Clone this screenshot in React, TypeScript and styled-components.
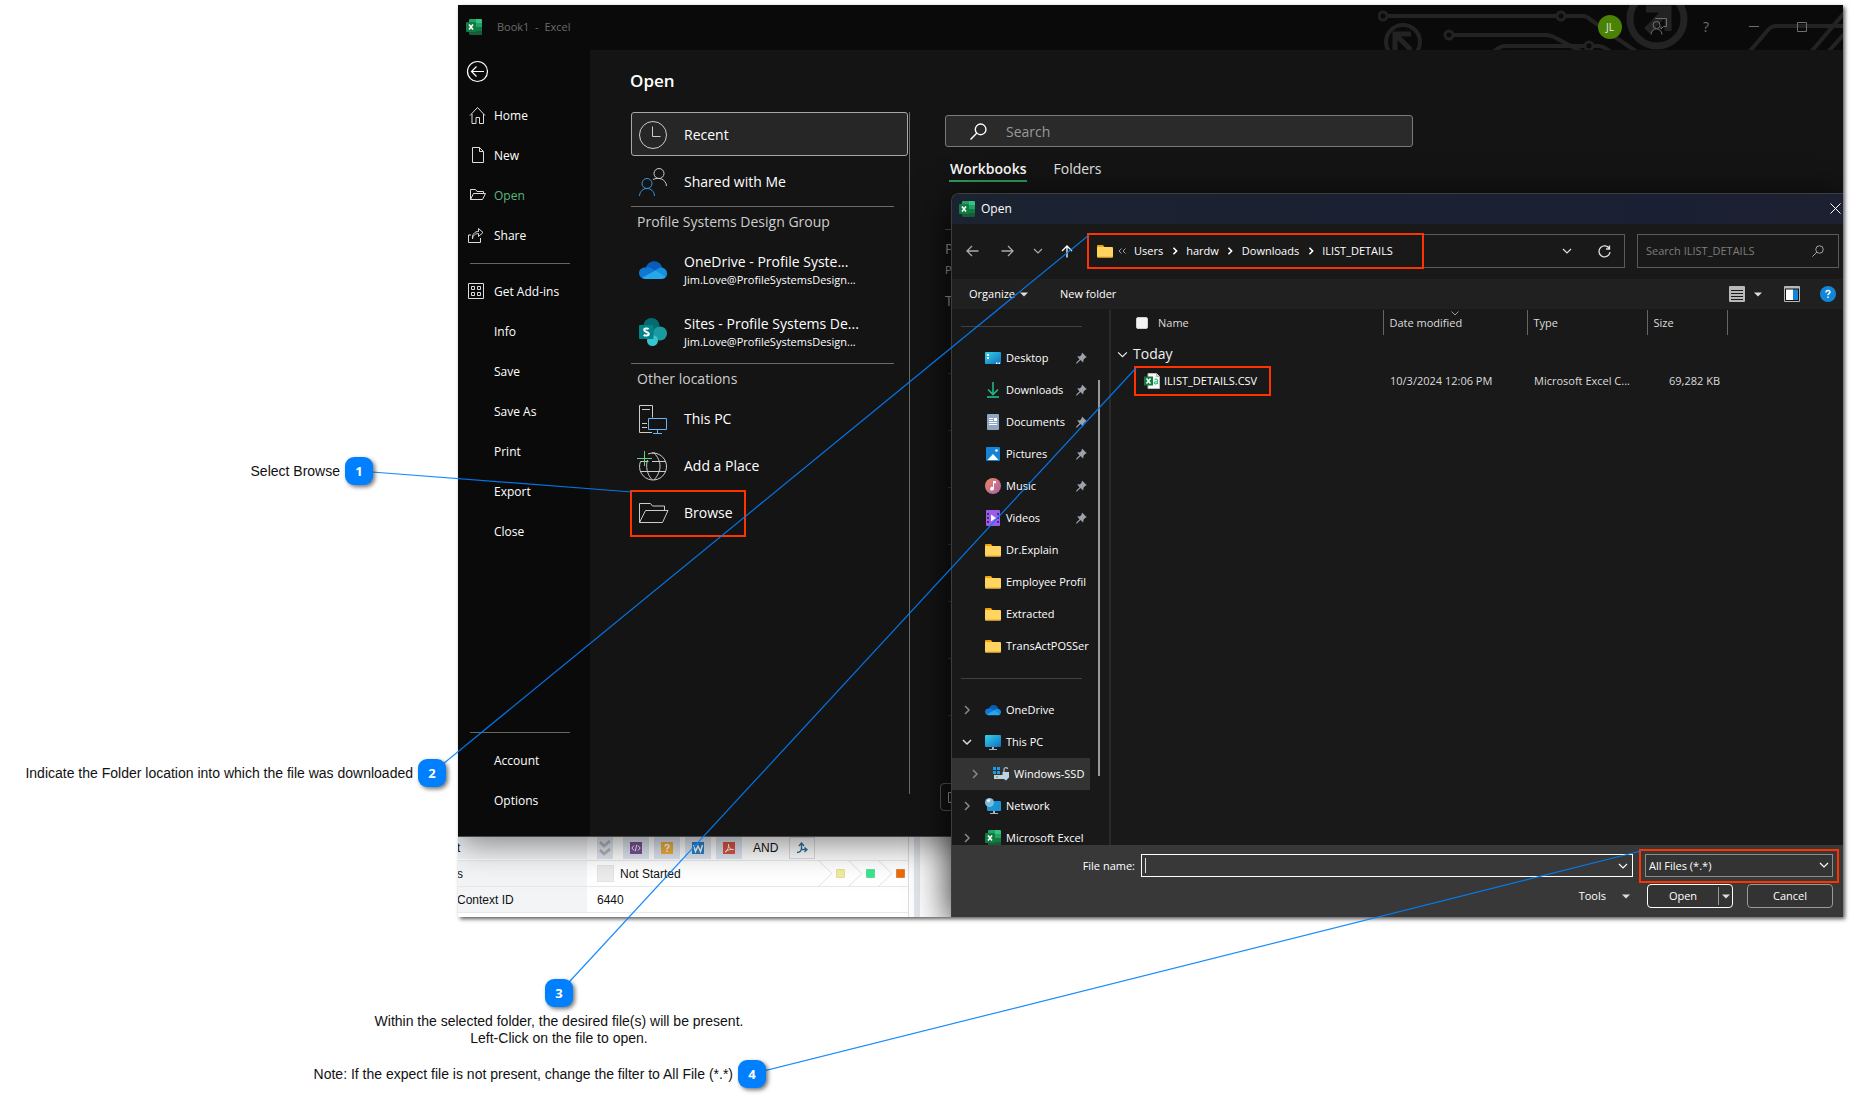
import React, { useLayoutEffect, useRef, useState } from "react";
import styled, { createGlobalStyle, css } from "styled-components";

const ui = `"Open Sans", "Noto Sans", sans-serif`;
const doc = `"Liberation Sans", Arial, sans-serif`;
const accent = "#007fff";
const marker = "#ff3300";

const GlobalStyle = createGlobalStyle`
  *, *::before, *::after { box-sizing: border-box; }
  body { margin: 0; background: #fff; color: #111; font-family: ${doc}; }
  button, input, select { font: inherit; color: inherit; margin: 0; }
  ul, ol, h1, h2, p { margin: 0; padding: 0; list-style: none; }
  svg { display: block; flex: none; }
`;

/* ---------- page and callouts ---------- */

const Page = styled.main`
  position: relative;
  min-height: 100vh;
  padding: 5px 9px 0 0;
  overflow: hidden;
`;

const Stage = styled.div`
  display: grid;
  grid-template-columns: 458px minmax(0, 1fr);
`;

const SideNotes = styled.div`
  display: flex;
  flex-direction: column;
  align-items: flex-end;
  gap: 274px;
  padding-top: 452px;
`;

const BottomNotes = styled.div`
  display: flex;
  flex-direction: column;
  align-items: flex-end;
  gap: 13px;
  width: 766px;
  padding: 62px 0 11px;
`;

const Note = styled.div<{ $inset?: number }>`
  display: flex;
  align-items: center;
  gap: 5px;
  margin-right: ${(p) => p.$inset ?? 0}px;
  font-size: 14px;
  line-height: 17px;
  white-space: nowrap;
`;

const StackedNote = styled(Note)`
  flex-direction: column;
  gap: 6px;
  width: 414px;
  text-align: center;
`;

const Badge = styled.span`
  position: relative;
  z-index: 6;
  display: grid;
  place-items: center;
  flex: none;
  width: 28px;
  height: 28px;
  border-radius: 9px;
  background: ${accent};
  color: #fff;
  font: 700 13px/16px ${ui};
  box-shadow: 2px 2px 4px rgba(0, 0, 0, 0.55);
`;

const Marked = styled.div`
  position: relative;
`;

const Highlight = styled.span<{ $inset: string }>`
  position: absolute;
  inset: ${(p) => p.$inset};
  border: 2px solid ${marker};
  pointer-events: none;
`;

const ConnectorLayer = styled.svg`
  position: absolute;
  inset: 0;
  z-index: 5;
  width: 100%;
  height: 100%;
  pointer-events: none;
`;

type Segment = { x1: number; y1: number; x2: number; y2: number };

function Connectors({ count }: { count: number }) {
  const ref = useRef<SVGSVGElement>(null);
  const [segments, setSegments] = useState<Segment[]>([]);

  useLayoutEffect(() => {
    const measure = () => {
      const host = ref.current;
      if (!host) return;
      const origin = host.getBoundingClientRect();
      const next: Segment[] = [];
      for (let i = 1; i <= count; i += 1) {
        const from = document.querySelector(`[data-badge="${i}"]`)?.getBoundingClientRect();
        const to = document.querySelector(`[data-target="${i}"]`)?.getBoundingClientRect();
        if (from && to) {
          next.push({
            x1: from.left + from.width / 2 - origin.left,
            y1: from.top + from.height / 2 - origin.top,
            x2: to.left + 2 - origin.left,
            y2: to.top + 2 - origin.top,
          });
        }
      }
      setSegments(next);
    };
    measure();
    document.fonts?.ready.then(measure);
    window.addEventListener("resize", measure);
    return () => window.removeEventListener("resize", measure);
  }, [count]);

  return (
    <ConnectorLayer ref={ref} aria-hidden="true">
      {segments.map((s, i) => (
        <line key={i} {...s} stroke={accent} strokeOpacity={0.9} strokeWidth={1.2} />
      ))}
    </ConnectorLayer>
  );
}

/* ---------- captured desktop ---------- */

const Desktop = styled.section`
  position: relative;
  display: flex;
  flex-direction: column;
  min-height: 912px;
  background: #fff;
  font-family: ${ui};
  box-shadow: 2px 2px 4px rgba(0, 0, 0, 0.65);
`;

const Clip = styled.div`
  position: relative;
  flex: 1;
  display: flex;
  flex-direction: column;
  overflow: hidden;
`;

const ExcelWindow = styled.div`
  position: relative;
  z-index: 1;
  display: flex;
  flex-direction: column;
  height: 832px;
  background: #141414;
  color: #fff;
  border-bottom: 1px solid #4a4648;
  box-shadow: 0 6px 32px rgba(0, 0, 0, 0.5);
`;

const TitleBar = styled.header`
  position: relative;
  display: flex;
  align-items: center;
  height: 45px;
  padding: 0 17px 2px 8px;
  background: #0a0a0a;
`;

const TitleText = styled.span`
  flex: 1;
  margin-left: 15px;
  padding-top: 1px;
  color: #6a6a6a;
  font-size: 11px;
  line-height: 16px;
  white-space: pre;
`;

const Circuit = styled.svg`
  position: absolute;
  top: 0;
  right: 0;
`;

const Avatar = styled.span`
  position: relative;
  display: grid;
  place-items: center;
  width: 24px;
  height: 24px;
  margin-right: 12px;
  border-radius: 50%;
  background: #498205;
  color: #e6e6e6;
  font-size: 10px;
`;

const WindowButton = styled.button`
  position: relative;
  display: grid;
  place-items: center;
  width: 48px;
  height: 42px;
  padding: 0;
  border: 0;
  background: none;
  color: #6f6f6f;
  font-size: 14px;
`;

const Backstage = styled.div`
  flex: 1;
  display: grid;
  grid-template-columns: 132px auto minmax(0, 1fr);
  min-height: 0;
`;

const NavRail = styled.nav`
  display: flex;
  flex-direction: column;
  padding-bottom: 15px;
  background: #0a0a0a;
`;

const BackButton = styled.button`
  display: flex;
  align-items: center;
  height: 46px;
  padding: 0 0 3px 8px;
  border: 0;
  background: none;
`;

const NavItem = styled.button<{ $active?: boolean }>`
  display: grid;
  grid-template-columns: 18px 1fr;
  align-items: center;
  gap: 8px;
  height: 40px;
  padding: 0 0 0 10px;
  border: 0;
  background: none;
  color: ${(p) => (p.$active ? "#57b97b" : "#fff")};
  font-size: 12px;
  line-height: 16px;
  text-align: left;
  white-space: nowrap;

  span { grid-column: 2; }
`;

const NavRule = styled.hr<{ $push?: boolean }>`
  width: 100px;
  margin: ${(p) => (p.$push ? "auto 0 8px 12px" : "7px 0 8px 12px")};
  border: 0;
  border-top: 1px solid #666;
`;

const PlacesPane = styled.section`
  display: flex;
  flex-direction: column;
  padding: 17px 35px 42px 40px;
`;

const PaneTitle = styled.h1`
  font-size: 17px;
  line-height: 28px;
  font-weight: 600;
`;

const Places = styled.div`
  flex: 1;
  display: flex;
  flex-direction: column;
  gap: 3px;
  width: 280px;
  margin-top: 17px;
  padding: 0 1px;
  border-right: 1px solid #6a6a6a;
`;

const PlaceButton = styled.button<{ $selected?: boolean }>`
  display: flex;
  align-items: center;
  gap: 17px;
  height: 44px;
  padding: 1px 11px 0 7px;
  border: 1px solid ${(p) => (p.$selected ? "#a8a8a8" : "transparent")};
  border-radius: 3px;
  background: ${(p) => (p.$selected ? "#262626" : "none")};
  font-size: 14px;
  line-height: 20px;
  text-align: left;
`;

const PlaceMark = styled(Marked)`
  align-self: flex-start;
`;

const AccountPlace = styled.button`
  display: grid;
  grid-template-columns: 28px 1fr;
  align-items: center;
  gap: 17px;
  padding: 13px 8px 10px;
  border: 0;
  background: none;
  text-align: left;
  white-space: nowrap;
`;

const AccountName = styled.span`
  display: block;
  font-size: 14px;
  line-height: 20px;
`;

const AccountMail = styled.span`
  display: block;
  font-size: 11px;
  line-height: 16px;
`;

const PlaceRule = styled.hr`
  width: 263px;
  margin: 0;
  border: 0;
  border-top: 1px solid #6a6a6a;
`;

const PlaceHeading = styled.h2`
  height: 26px;
  padding-left: 6px;
  color: #cdcdcd;
  font-size: 14px;
  line-height: 24px;
  font-weight: 400;
`;

const FilesPane = styled.section`
  display: flex;
  flex-direction: column;
  align-items: flex-start;
  padding-top: 65px;
`;

const SearchField = styled.label`
  display: flex;
  align-items: center;
  gap: 19px;
  width: 468px;
  height: 32px;
  padding: 0 24px;
  border: 1px solid #7a7a7a;
  border-radius: 3px;
  background: #2a2a2a;

  input {
    flex: 1;
    min-width: 0;
    padding: 0;
    border: 0;
    outline: 0;
    background: none;
    font-size: 14px;
  }
  input::placeholder { color: #999; opacity: 1; }
`;

const Tabs = styled.div`
  display: flex;
  gap: 25px;
  padding: 9px 0 0 4px;
`;

const Tab = styled.button<{ $active?: boolean }>`
  height: 26px;
  padding: 2px 1px 1px;
  border: 0;
  border-bottom: 2px solid ${(p) => (p.$active ? "#2ea05a" : "transparent")};
  background: none;
  color: ${(p) => (p.$active ? "#fff" : "#e6e6e6")};
  font-size: 14px;
  line-height: 20px;
  font-weight: ${(p) => (p.$active ? 600 : 400)};
`;

const FileList = styled.div`
  width: 100%;
  margin-top: 47px;
  padding-top: 8px;
  border-top: 1px solid #555;
  color: #aaa;
  font-size: 14px;
  line-height: 22px;

  small { display: block; font-size: 11px; line-height: 20px; }
  p + p { margin-top: 10px; }
`;

const HiddenRows = styled.div`
  width: 100%;
  margin: 61px 0 11px 3px;
  div { height: 57px; border-top: 1px solid #3c3c3c; }
`;

const RecoverButton = styled.button`
  height: 28px;
  margin-left: -5px;
  padding: 0 7px;
  border: 1px solid #5a5a5a;
  border-radius: 4px;
  background: #141414;
`;

/* ---------- form strip behind the windows ---------- */

const FormStrip = styled.div`
  flex: 1;
  display: flex;
  min-height: 80px;
  color: #111;
  font-family: ${doc};
  font-size: 12px;
  line-height: 16px;
`;

const FormRows = styled.div`
  width: 451px;
  border-right: 1px solid #dcdfe3;
`;

const FormRow = styled.div`
  display: grid;
  grid-template-columns: 129px 1fr;
  height: 26px;
  border-bottom: 1px solid #e6e8ea;

  &:first-child { height: 24px; padding-bottom: 1px; }
`;

const FormLabel = styled.div`
  display: flex;
  align-items: center;
  overflow: hidden;
  background: #f2f4f6;
  text-indent: -1px;
`;

const FormValue = styled.div`
  display: flex;
  align-items: center;
  gap: 5px;
  padding: 0 2px 0 10px;
`;

const FormTool = styled.button<{ $narrow?: boolean; $outlined?: boolean }>`
  display: grid;
  place-items: center;
  width: ${(p) => (p.$narrow ? 16 : 26)}px;
  height: 22px;
  margin-right: ${(p) => (p.$narrow ? 5 : 0)}px;
  padding: 0;
  border: ${(p) => (p.$outlined ? "1px solid #dcdfe3" : "0")};
  background: ${(p) => (p.$outlined ? "none" : "#dfe6f0")};
`;

const Operator = styled.span`
  padding: 0 6px;
`;

const StateBox = styled.span`
  width: 17px;
  height: 17px;
  margin-right: 1px;
  border: 1px solid #e4e4e4;
  background: #ececec;
`;

const Steps = styled.svg`
  margin-left: auto;
`;

const Gutter = styled.div`
  width: 6px;
  margin-left: 5px;
  background: #e3e8ee;
`;

/* ---------- file dialog ---------- */

const Dialog = styled.section`
  position: absolute;
  z-index: 2;
  top: 188px;
  right: 0;
  bottom: 0;
  left: 493px;
  display: flex;
  flex-direction: column;
  border: solid #3d3d3d;
  border-width: 1px 0 0 1px;
  border-radius: 8px 0 0 0;
  overflow: hidden;
  background: #191919;
  color: #fff;
  font-size: 11px;
  line-height: 16px;
  box-shadow: 0 8px 40px rgba(0, 0, 0, 0.9);
`;

const DialogTitle = styled.header`
  display: flex;
  align-items: center;
  gap: 6px;
  height: 30px;
  padding: 0 0 1px 7px;
  background: linear-gradient(90deg, #1b2230, #1b1f33 80%, #1c2030);

  h2 { flex: 1; font-size: 12px; font-weight: 400; }
`;

const IconButton = styled.button<{ $width?: number; $tone?: string }>`
  display: grid;
  place-items: center;
  flex: none;
  width: ${(p) => p.$width ?? 16}px;
  height: 24px;
  padding: 0;
  border: 0;
  background: none;
  color: ${(p) => p.$tone ?? "#ddd"};
`;

const AddressBar = styled.div`
  display: flex;
  align-items: center;
  height: 55px;
  padding: 0 4px 1px 2px;
`;

const AddressBox = styled.div`
  flex: 1;
  display: flex;
  align-items: center;
  height: 34px;
  margin: 0 12px 0 6px;
  border: 1px solid #5a5a5a;
`;

const Crumbs = styled(Marked)`
  display: flex;
  align-items: center;
  height: 32px;
  margin-right: auto;
  padding: 0 29px 0 8px;
  white-space: nowrap;

  a { color: #fff; text-decoration: none; }
`;

const Earlier = styled.span`
  margin: 0 8px 0 5px;
`;

const CrumbGap = styled.span`
  display: grid;
  place-items: center;
  width: 23px;
`;

const FolderSearch = styled.label`
  display: flex;
  align-items: center;
  width: 202px;
  height: 34px;
  padding: 0 14px 0 8px;
  border: 1px solid #5a5a5a;

  input {
    flex: 1;
    min-width: 0;
    padding: 0;
    border: 0;
    outline: 0;
    background: none;
  }
  input::placeholder { color: #7d7d7d; opacity: 1; }
`;

const ToolStrip = styled.div`
  display: flex;
  align-items: center;
  height: 30px;
  padding: 0 7px 0 17px;
  background: #202020;
`;

const TextButton = styled.button<{ $gap?: number; $after?: number }>`
  display: flex;
  align-items: center;
  gap: ${(p) => p.$gap ?? 5}px;
  margin-right: ${(p) => p.$after ?? 0}px;
  padding: 0;
  border: 0;
  background: none;
`;

const StripEnd = styled.div`
  display: flex;
  align-items: center;
  margin-left: auto;
`;

const Browser = styled.div`
  flex: 1;
  display: flex;
  min-height: 0;
  padding-top: 1px;
  overflow: hidden;
`;

const Tree = styled.nav`
  display: flex;
  flex: none;
  width: 159px;
  border-right: 2px solid #2a2a2a;

  ul { width: 138px; overflow: hidden; }
`;

const TreeRule = styled.li`
  display: flex;
  align-items: center;
  height: 32px;
  padding-left: 9px;

  &::before { content: ""; width: 121px; border-top: 1px solid #404040; }
`;

const TreeItem = styled.li<{ $nested?: boolean; $selected?: boolean }>`
  display: grid;
  grid-template-columns: 23px 16px minmax(0, 1fr) auto;
  align-items: center;
  height: 32px;
  padding: 0 3px 0 ${(p) => (p.$nested ? 18 : 10)}px;
  ${(p) =>
    p.$selected &&
    css`
      background: #333;
      padding-right: 0;
    `}

  a {
    padding-left: 5px;
    color: #fff;
    text-decoration: none;
    white-space: nowrap;
  }
`;

const Thumb = styled.span`
  width: 2px;
  height: 396px;
  margin: 70px 0 0 8px;
  background: #9a9a9a;
`;

const FileTable = styled.table`
  flex: 1;
  align-self: flex-start;
  width: 100%;
  table-layout: fixed;
  border-collapse: collapse;
  color: #dcdcdc;

  th, td { padding: 0; font-weight: 400; text-align: left; white-space: nowrap; }
  td:nth-child(n + 2) { padding-left: 7px; }
  td:nth-child(4) { padding-right: 7px; text-align: right; }
`;

const HeadCell = styled.th`
  position: relative;
  height: 25px;
  border-right: 1px solid #666;

  && { padding-left: 6px; }
  &:last-child { border-right: 0; }
`;

const NameHead = styled.label`
  display: flex;
  align-items: center;
  gap: 10px;
  padding-left: 19px;

  input {
    appearance: none;
    width: 12px;
    height: 12px;
    border: 1px solid #cfcfcf;
    border-radius: 2px;
    background: #f3f3f3;
  }
`;

const SortMark = styled.svg`
  position: absolute;
  top: 1px;
  left: 50%;
  margin-left: -4px;
`;

const GroupCell = styled.th`
  height: 32px;

  && { padding: 6px 0 0 6px; }
  button {
    display: flex;
    align-items: center;
    gap: 5px;
    padding: 0;
    border: 0;
    background: none;
    color: #f0f0f0;
    font-size: 14px;
    line-height: 20px;
  }
`;

const FileName = styled(Marked)`
  display: inline-flex;
  align-items: center;
  gap: 4px;
  height: 28px;
  margin-left: 24px;
  padding: 0 13px 0 9px;
  vertical-align: top;
  color: #fff;
`;

const DialogFooter = styled.footer`
  display: flex;
  flex-direction: column;
  gap: 7px;
  padding: 9px 10px 9px 0;
  background: #383838;
`;

const FooterRow = styled.div`
  display: flex;
  align-items: center;
  justify-content: flex-end;
`;

const FieldLabel = styled.label`
  width: 189px;
  padding-right: 6px;
  text-align: right;
`;

const NameBox = styled.div`
  flex: 1;
  display: flex;
  align-items: center;
  height: 23px;
  margin-right: 12px;
  padding: 0 4px 0 3px;
  border: 1px solid #fff;

  input {
    flex: 1;
    min-width: 0;
    padding: 0 4px;
    border: 0;
    outline: 0;
    background: none;
  }
`;

const Caret = styled.span`
  width: 1px;
  height: 15px;
  background: #ddd;
`;

const FilterBox = styled(Marked)`
  width: 188px;
  height: 23px;

  select {
    appearance: none;
    width: 100%;
    height: 100%;
    padding: 0 20px 0 3px;
    border: 1px solid #8c8c8c;
    border-radius: 0;
    background: #333;
  }
  svg { position: absolute; top: 6px; right: 4px; }
`;

const Action = styled.button`
  display: flex;
  align-items: center;
  justify-content: center;
  width: 86px;
  height: 24px;
  padding: 0;
  border: 1px solid #9a9a9a;
  border-radius: 4px;
  background: #333;
`;

const SplitAction = styled.div`
  display: flex;
  align-items: center;
  width: 86px;
  height: 24px;
  margin-right: 14px;
  border: 1px solid #fff;
  border-radius: 4px;
  background: #333;

  button { height: 18px; padding: 0; border: 0; background: none; }
  button:first-child { flex: 1; }
  button:last-child { display: grid; place-items: center; width: 14px; border-left: 1px solid #999; }
`;

/* ---------- icons ---------- */

const line = { fill: "none", stroke: "currentColor", strokeWidth: 1 } as const;

const ExcelIcon = () => (
  <svg width="16" height="16" viewBox="0 0 16 16">
    <path d="M3 1a1 1 0 0 1 1-1h6v4H3z" fill="#21a366" />
    <path d="M10 0h5a1 1 0 0 1 1 1v3h-6z" fill="#33c481" />
    <path d="M3 4h7v4H3z" fill="#107c41" />
    <path d="M10 4h6v4h-6z" fill="#21a366" />
    <path d="M3 8h7v4H3z" fill="#185c37" />
    <path d="M10 8h6v4h-6z" fill="#107c41" />
    <path d="M3 12h13v3a1 1 0 0 1-1 1H4a1 1 0 0 1-1-1z" fill="#185c37" />
    <rect y="3" width="10" height="10" rx="1" fill="#107c41" />
    <path d="M3 5.500l4 5M7 5.500l-4 5" stroke="#fff" strokeWidth="1.600" fill="none" />
  </svg>
);

const CsvIcon = () => (
  <svg width="16" height="16" viewBox="0 0 16 16">
    <path d="M4 .5h8.500L15.500 3.500v12H4z" fill="#f8f8f8" stroke="#bbb" />
    <path d="M12.500.5v3h3" fill="#ddd" stroke="#888" strokeWidth=".6" />
    <path d="M10.500 6.500c2-1 3 0 3 1.200V11M13.500 8.500c-3 0-3.400.8-3.200 1.600.3 1.200 2.500 1 3.200-.4" fill="none" stroke="#33c481" strokeWidth="1.200" />
    <rect y="3.500" width="9" height="9" fill="#107c41" />
    <path d="M2.500 5.500l4 5M6.500 5.500l-4 5" stroke="#fff" strokeWidth="1.500" />
  </svg>
);

const CloudIcon = ({ size = 28 }: { size?: number }) => (
  <svg width={size} height={size} viewBox="0 0 28 28">
    <path d="M6.500 12.500C8 7.500 12 5 15.500 5.300c4 .2 6.500 2.700 7.700 6.200l-8 5z" fill="#0a5cb8" />
    <path d="M0 17c0-3.500 3-6 7-5.500 2-.8 4.500 0 7 1.500l5 3L3.500 22.500C1.500 21.500 0 19.500 0 17z" fill="#0f78d4" />
    <path d="M15 15.500l5-3.700c4.500-1 8 2 8 5.700 0 1.500-.5 2.500-1 3.300z" fill="#1490df" />
    <path d="M3 21.800L16.500 14.500 27 20.800C26 22.300 24.500 23 22.500 23H7c-1.500 0-3-.4-4-1.200z" fill="#28a8ea" />
  </svg>
);

const SitesIcon = () => (
  <svg width="28" height="28" viewBox="0 0 28 28">
    <circle cx="12.500" cy="8" r="8" fill="#036c70" />
    <circle cx="21" cy="15.500" r="7" fill="#1a9ba1" />
    <circle cx="13.500" cy="22.500" r="5.500" fill="#37c6d0" />
    <rect x="0" y="7" width="14.500" height="14" rx="1" fill="#038387" />
    <path d="M9.700 11c-1-.8-4.500-1-4.500 1.100 0 2.200 4.600 1.500 4.600 3.700 0 2.200-3.700 2.100-5.100 1.100" fill="none" stroke="#fff" strokeWidth="2" />
  </svg>
);

const FolderIcon = () => (
  <svg width="16" height="16" viewBox="0 0 16 16">
    <path d="M0 3a1 1 0 0 1 1-1h5l1.500 2H15v4H0z" fill="#f0a30a" />
    <rect y="4" width="16" height="10.500" rx="1" fill="#ffd560" />
    <path d="M0 13.500h16c0 .6-.4 1-1 1H1c-.6 0-1-.4-1-1z" fill="#e8a92a" />
  </svg>
);

const Monitor = () => (
  <svg width="16" height="16" viewBox="0 0 16 16">
    <defs>
      <linearGradient id="screen" x1="0" y1="0" x2="1" y2="1">
        <stop offset="0" stopColor="#35d0e6" />
        <stop offset="1" stopColor="#0f6fc4" />
      </linearGradient>
    </defs>
    <rect y="1" width="16" height="12" rx="1" fill="url(#screen)" />
    <path d="M7 13h2v2h3v1H4v-1h3z" fill="#a9b4bf" />
  </svg>
);

const NetworkIcon = () => (
  <svg width="16" height="16" viewBox="0 0 16 16">
    <rect x="2" y="3" width="14" height="10" rx="1" fill="#1795d4" />
    <path d="M8 13h2v2h3v1H5v-1h3z" fill="#a9b4bf" />
    <circle cx="4.500" cy="4.500" r="4.500" fill="#7fb9d8" />
    <path d="M1.500 2.500c1.500-1.500 3-1.500 4-1L5 3.500 3 4.500z" fill="#dff1fa" />
  </svg>
);

const DriveIcon = () => (
  <svg width="16" height="16" viewBox="0 0 16 16">
    <path d="M0 1h3v3H0zM4 1h3v3H4zM0 5h3v3H0zM4 5h3v3H4z" fill="#1a9be8" />
    <path d="M1 9h10v4H1z" fill="#c9ced3" />
    <circle cx="4" cy="11" r=".8" fill="#2c9c4a" />
    <path d="M11 6V3.500c0-2.500 3.500-2.500 3.500-.5" fill="none" stroke="#aeb9c2" strokeWidth="1.300" />
    <path d="M9.500 6H16v5.500L13 14.500 9.500 12z" fill="#b9d4e6" />
  </svg>
);

const DesktopIcon = () => (
  <svg width="16" height="16" viewBox="0 0 16 16">
    <rect y="2" width="16" height="12" rx="1" fill="url(#screen)" />
    <path d="M2 4h2v2H2zM2 7h2v2H2zM11 12.500h1.500V14H11zM13.500 12.500H15V14h-1.500z" fill="#fff" />
  </svg>
);

const DownloadIcon = () => (
  <svg width="16" height="16" viewBox="0 0 16 16">
    <path d="M8 0v12M3 7.500l5 5 5-5" fill="none" stroke="#22b488" strokeWidth="1.600" />
    <path d="M2 15h12" stroke="#22b488" strokeWidth="1.700" />
  </svg>
);

const DocumentIcon = () => (
  <svg width="16" height="16" viewBox="0 0 16 16">
    <rect x="2" width="12" height="16" rx="1" fill="#8ea6c0" />
    <path d="M4 4.500h4M4 6.500h4M4 8.500h8M4 10.500h8" stroke="#fff" />
    <path d="M9 4h3v3H9z" fill="#fff" />
  </svg>
);

const PictureIcon = () => (
  <svg width="16" height="16" viewBox="0 0 16 16">
    <rect x="1" y="1" width="14" height="14" rx="1" fill="#1583d8" />
    <path d="M2.500 14L8 8l5.500 6z" fill="#fff" />
    <circle cx="11.500" cy="4.500" r="1.300" fill="#fff" />
  </svg>
);

const MusicIcon = () => (
  <svg width="16" height="16" viewBox="0 0 16 16">
    <defs>
      <linearGradient id="music" x1="0" y1="0" x2="1" y2="1">
        <stop offset="0" stopColor="#f0885c" />
        <stop offset="1" stopColor="#a95fae" />
      </linearGradient>
    </defs>
    <circle cx="8" cy="8" r="8" fill="url(#music)" />
    <path d="M8 3h3v2.200H9v5.300A1.900 1.900 0 1 1 8 9z" fill="#fff" />
  </svg>
);

const VideoIcon = () => (
  <svg width="16" height="16" viewBox="0 0 16 16">
    <rect x="1" width="14" height="16" rx="1" fill="#9b5de5" />
    <path d="M2 3h2v2H2zM2 7h2v2H2zM2 11h2v2H2zM12 3h2v2h-2zM12 7h2v2h-2zM12 11h2v2h-2z" fill="#4a1f86" />
    <path d="M6 4.500l5 3.500-5 3.500z" fill="#fff" />
  </svg>
);

const PinIcon = () => (
  <svg width="11" height="12" viewBox="0 0 11 12">
    <path d="M6 .5l4.800 4.700-1.500.6-1.800 1.900-.3 2.800L4.500 8 1 11.500H0V11l3.500-3.800L1.200 4.500l3-.3L5.700 2.200z" fill="#9aa3ab" />
  </svg>
);

const Chevron = ({ dir, size = 10, weight = 1.200 }: { dir: "down" | "right"; size?: number; weight?: number }) => (
  <svg width={size} height={size} viewBox="0 0 10 10" {...line} strokeWidth={weight}>
    <path d={dir === "down" ? "M1 3l4 4 4-4" : "M3 1l4 4-4 4"} />
  </svg>
);

const Triangle = () => (
  <svg width="8" height="5" viewBox="0 0 8 5">
    <path d="M0 .5h8L4 4.500z" fill="#ddd" />
  </svg>
);

const Lens = ({ size }: { size: number }) => (
  <svg width={size} height={size} viewBox="0 0 16 16" {...line} strokeWidth={1.300}>
    <circle cx="10" cy="6" r="5" />
    <path d="M6.500 9.500L.5 15.500" />
  </svg>
);

const CircuitArt = () => (
  <Circuit width="465" height="45" viewBox="0 0 465 45" fill="none" stroke="#232323" strokeWidth="4" aria-hidden="true">
    <circle cx="5" cy="11" r="4" strokeWidth="3" />
    <path d="M9 11h170" />
    <circle cx="183" cy="11" r="4" strokeWidth="3" />
    <path d="M187 11h18q4 0 8 4l24 17 22 15" />
    <circle cx="25" cy="37" r="17" strokeWidth="4" />
    <path d="M17 45V29h16M18 30l15 15" strokeWidth="5" />
    <circle cx="71" cy="30" r="4" strokeWidth="3" />
    <path d="M75 30h93q5 0 10 3l26 14" />
    <circle cx="211" cy="41" r="4" strokeWidth="3" />
    <path d="M207 41h-80q-4 0-8 3l-5 4M215 41h6q4 0 12 6" />
    <circle cx="279" cy="14" r="27" strokeWidth="7" />
    <path d="M268 4h22v22" strokeWidth="7" />
    <path d="M289 5l-20 21" strokeWidth="8" />
    <path d="M371 47l19-22q3-4 8-4h67M433 47l34-40M450 47l16-18" />
  </Circuit>
);

const navIcons: Record<string, React.ReactNode> = {
  Home: (
    <svg width="18" height="18" viewBox="0 0 18 18" {...line} stroke="#ddd">
      <path d="M2 8.500L9.500.5 17 8.500M4 7v9.500h4v-6h3.500v6h4V7" />
    </svg>
  ),
  New: (
    <svg width="18" height="18" viewBox="0 0 18 18" {...line} stroke="#ddd">
      <path d="M4.500.5h7l4 4v11h-11zM11.500.5v4h4" />
    </svg>
  ),
  Open: (
    <svg width="18" height="18" viewBox="0 0 18 18" {...line} stroke="#ddd">
      <path d="M2.500 12.500v-10h5l1.500 2h6.500v2.500M2.500 12.500l3-6H17.500l-3 6z" />
    </svg>
  ),
  Share: (
    <svg width="18" height="18" viewBox="0 0 18 18" {...line} stroke="#ddd">
      <path d="M3 8H.5v7.500h12V11M4.500 12c.5-4 3-5.500 6-5.500V9.500L15 5.500l-4.500-4v3C6.500 4.500 4 7.500 4.500 12z" />
    </svg>
  ),
  "Get Add-ins": (
    <svg width="18" height="18" viewBox="0 0 18 18" {...line} stroke="#ddd">
      <path d="M.5.5h15v15H.5zM3.500 3.500h3v3h-3zM9.500 3.500h3v3h-3zM3.500 9.500h3v3h-3zM9.500 9.500h3v3h-3z" />
    </svg>
  ),
};

const ClockIcon = () => (
  <svg width="28" height="28" viewBox="0 0 28 28" {...line} stroke="#ccc">
    <circle cx="14" cy="14" r="13.500" />
    <path d="M13.500 5.500v10h8" />
  </svg>
);

const PeopleIcon = () => (
  <svg width="28" height="28" viewBox="0 0 28 28" {...line} stroke="#ccc">
    <circle cx="20" cy="5.500" r="5" />
    <path d="M14 11.500c5-2.500 13-1 13.500 6.500" />
    <g stroke="#3a96dd">
      <circle cx="8" cy="15.500" r="5" />
      <path d="M.5 28c.5-10 14.500-10 15 0" />
    </g>
  </svg>
);

const ComputerIcon = () => (
  <svg width="28" height="30" viewBox="0 0 28 30" {...line} stroke="#ccc">
    <path d="M13 28.500H.5V1.500h13v12M3 5.500h8M3 19.500h5M3 23.500h5" />
    <path d="M9.500 14.500h18v11h-18zM18.500 25.500v3.500M14 29.500h9" stroke="#6cb4f0" />
  </svg>
);

const GlobeIcon = () => (
  <svg width="28" height="30" viewBox="0 0 28 30" {...line} stroke="#ccc" overflow="visible">
    <path d="M9 3A13.500 13.500 0 1 1 1.500 10.500M13 2q1-.2 3 0M8.500 9C6.500 15 8 24 13.500 29M15 2c8 8 8 18 0 27M13 10.500h13.500M1.500 10.500h8M1 20.500h26" />
    <path d="M5.500 0v15M-2 7.500h15" stroke="#5fd37a" />
  </svg>
);

const BigFolderIcon = () => (
  <svg width="28" height="28" viewBox="0 0 28 28" {...line} stroke="#ccc" overflow="visible">
    <path d="M.5 23.500v-19h11l2 2.500h12v4.500M.5 23.500l6-12h22.500l-5.500 12z" />
  </svg>
);

/* ---------- content ---------- */

const mainNav = ["Home", "New", "Open", "Share"];
const fileNav = ["Get Add-ins", "Info", "Save", "Save As", "Print", "Export", "Close"];
const endNav = ["Account", "Options"];
const crumbs = ["Users", "hardw", "Downloads", "ILIST_DETAILS"];

const pinned: [string, React.ReactNode][] = [
  ["Desktop", <DesktopIcon />],
  ["Downloads", <DownloadIcon />],
  ["Documents", <DocumentIcon />],
  ["Pictures", <PictureIcon />],
  ["Music", <MusicIcon />],
  ["Videos", <VideoIcon />],
];
const folders = ["Dr.Explain", "Employee Profil", "Extracted", "TransActPOSSer"];
const roots: { name: string; icon: React.ReactNode; open?: boolean; nested?: boolean }[] = [
  { name: "OneDrive", icon: <CloudIcon size={16} /> },
  { name: "This PC", icon: <Monitor />, open: true },
  { name: "Windows-SSD", icon: <DriveIcon />, nested: true },
  { name: "Network", icon: <NetworkIcon /> },
  { name: "Microsoft Excel", icon: <ExcelIcon /> },
];

function Nav({ names }: { names: string[] }) {
  return (
    <>
      {names.map((name) => (
        <NavItem key={name} $active={name === "Open"}>
          {navIcons[name]}
          <span>{name}</span>
        </NavItem>
      ))}
    </>
  );
}

function Excel() {
  return (
    <ExcelWindow>
      <TitleBar>
        <CircuitArt />
        <ExcelIcon />
        <TitleText>{"Book1  -  Excel"}</TitleText>
        <Avatar>JL</Avatar>
        <WindowButton aria-label="Feedback">
          <svg width="17" height="17" viewBox="0 0 17 17" {...line}>
            <circle cx="6.500" cy="7" r="3.500" />
            <path d="M1 16.500c.5-7.500 10.500-7.500 11 0M5.500 1V.5h11v8h-3L11 11V8.500" />
          </svg>
        </WindowButton>
        <WindowButton aria-label="Help">?</WindowButton>
        <WindowButton aria-label="Minimize">
          <svg width="10" height="10" viewBox="0 0 10 10" {...line}>
            <path d="M0 4.500h10" />
          </svg>
        </WindowButton>
        <WindowButton aria-label="Maximize">
          <svg width="10" height="10" viewBox="0 0 10 10" {...line}>
            <path d="M.5.5h9v9h-9z" />
          </svg>
        </WindowButton>
      </TitleBar>
      <Backstage>
        <NavRail aria-label="Backstage">
          <BackButton aria-label="Back">
            <svg width="23" height="23" viewBox="0 0 23 23" {...line} stroke="#fff" strokeWidth={1.200}>
              <circle cx="11.500" cy="11.500" r="10" />
              <path d="M18 11.500H6M10.500 6.500l-5 5 5 5" />
            </svg>
          </BackButton>
          <Nav names={mainNav} />
          <NavRule />
          <Nav names={fileNav} />
          <NavRule $push />
          <Nav names={endNav} />
        </NavRail>
        <PlacesPane>
          <PaneTitle>Open</PaneTitle>
          <Places>
            <PlaceButton $selected>
              <ClockIcon />
              Recent
            </PlaceButton>
            <PlaceButton>
              <PeopleIcon />
              Shared with Me
            </PlaceButton>
            <PlaceRule />
            <PlaceHeading>Profile Systems Design Group</PlaceHeading>
            <AccountPlace>
              <CloudIcon />
              <span>
                <AccountName>OneDrive - Profile Syste...</AccountName>
                <AccountMail>Jim.Love@ProfileSystemsDesign...</AccountMail>
              </span>
            </AccountPlace>
            <AccountPlace>
              <SitesIcon />
              <span>
                <AccountName>Sites - Profile Systems De...</AccountName>
                <AccountMail>Jim.Love@ProfileSystemsDesign...</AccountMail>
              </span>
            </AccountPlace>
            <PlaceRule />
            <PlaceHeading>Other locations</PlaceHeading>
            <PlaceButton>
              <ComputerIcon />
              This PC
            </PlaceButton>
            <PlaceButton>
              <GlobeIcon />
              Add a Place
            </PlaceButton>
            <PlaceMark>
              <PlaceButton>
                <BigFolderIcon />
                Browse
              </PlaceButton>
              <Highlight $inset="0 -1px -3px" data-target="1" />
            </PlaceMark>
          </Places>
        </PlacesPane>
        <FilesPane>
          <SearchField>
            <Lens size={17} />
            <input type="search" placeholder="Search" aria-label="Search" />
          </SearchField>
          <Tabs>
            <Tab $active>Workbooks</Tab>
            <Tab>Folders</Tab>
          </Tabs>
          <FileList>
            <p>
              P<small>P</small>
            </p>
            <p>T</p>
          </FileList>
          <HiddenRows>
            {[0, 1, 2, 3, 4, 5, 6].map((n) => (
              <div key={n} />
            ))}
          </HiddenRows>
          <RecoverButton aria-label="Recover workbooks">
            <svg width="13" height="13" viewBox="0 0 13 13" {...line} stroke="#aaa">
              <path d="M.5 1.500h12v10H.5zM3 11l4-9" />
            </svg>
          </RecoverButton>
        </FilesPane>
      </Backstage>
    </ExcelWindow>
  );
}

function BackgroundForm() {
  return (
    <FormStrip>
      <FormRows>
        <FormRow>
          <FormLabel>t</FormLabel>
          <FormValue>
            <FormTool $narrow aria-label="Check all">
              <svg width="12" height="16" viewBox="0 0 12 16" fill="none" stroke="#b4b4b4" strokeWidth="2.500">
                <path d="M1 2l4 4 6-5M1 10l4 4 6-5" />
              </svg>
            </FormTool>
            <FormTool aria-label="Source">
              <svg width="12" height="12" viewBox="0 0 12 12">
                <rect width="12" height="12" fill="#7b5299" />
                <path d="M4 3.500L1.800 6 4 8.500M8 3.500L10.200 6 8 8.500M6.800 2.800L5.200 9.200" fill="none" stroke="#fff" />
              </svg>
            </FormTool>
            <FormTool aria-label="Help file">
              <svg width="12" height="12" viewBox="0 0 12 12">
                <rect width="12" height="12" fill="#f0b13c" />
                <path d="M4 4.500C4 1.500 8.300 2 8 4.300 7.800 5.500 6 5.500 6 7.500M6 8.500V10" fill="none" stroke="#fff" strokeWidth="1.500" />
              </svg>
            </FormTool>
            <FormTool aria-label="Document">
              <svg width="12" height="12" viewBox="0 0 12 12">
                <rect width="12" height="12" fill="#2f82c4" />
                <path d="M1.500 3l2 6.500L6 4l2.500 5.500 2-6.500" fill="none" stroke="#fff" strokeWidth="1.500" />
              </svg>
            </FormTool>
            <FormTool aria-label="PDF">
              <svg width="12" height="12" viewBox="0 0 12 12">
                <rect width="12" height="12" fill="#e05345" />
                <path d="M2 10c3-2 4-5 3.500-8 0 4 2 6 5 5.500C8 7 5 7.500 2 10z" fill="none" stroke="#fff" />
              </svg>
            </FormTool>
            <Operator>AND</Operator>
            <FormTool $outlined aria-label="Merge">
              <svg width="12" height="12" viewBox="0 0 12 12" fill="none" stroke="#2f6f9f" strokeWidth="1.300">
                <path d="M1 10.500c3 0 4.500-2 4.500-5V2M3 4l2.500-3L8 4M5.500 7.500h5M8.500 5.500l2.500 2-2.500 2.500" />
              </svg>
            </FormTool>
          </FormValue>
        </FormRow>
        <FormRow>
          <FormLabel>s</FormLabel>
          <FormValue>
            <StateBox />
            Not Started
            <Steps width="88" height="25" viewBox="0 0 88 25" fill="none" stroke="#e2e2e2">
              <path d="M1 0l13 12.500L1 25M31 0l13 12.500L31 25M61 0l13 12.500L61 25" />
              <path d="M18.500 8.500h8v8h-8z" fill="#f0ec98" stroke="#e2dfa0" />
              <path d="M48.500 8.500h8v8h-8z" fill="#35e98b" stroke="#5fdc9c" />
              <path d="M78.500 8.500h8v8h-8z" fill="#ef6c00" stroke="#d9834a" />
            </Steps>
          </FormValue>
        </FormRow>
        <FormRow>
          <FormLabel>Context ID</FormLabel>
          <FormValue>6440</FormValue>
        </FormRow>
      </FormRows>
      <Gutter />
    </FormStrip>
  );
}

function OpenDialog() {
  return (
    <Dialog role="dialog" aria-label="Open">
      <DialogTitle>
        <ExcelIcon />
        <h2>Open</h2>
        <IconButton aria-label="Close dialog" $tone="#fff">
          <svg width="11" height="11" viewBox="0 0 11 11" {...line}>
            <path d="M.5.5l10 10M10.500.5l-10 10" />
          </svg>
        </IconButton>
      </DialogTitle>
      <AddressBar>
        <IconButton $width={36} $tone="#aaa" aria-label="Back">
          <svg width="13" height="12" viewBox="0 0 13 12" {...line} strokeWidth={1.300}>
            <path d="M12.500 6H1M6 1L1 6l5 5" />
          </svg>
        </IconButton>
        <IconButton $width={34} $tone="#aaa" aria-label="Forward">
          <svg width="13" height="12" viewBox="0 0 13 12" {...line} strokeWidth={1.300}>
            <path d="M.5 6H12M7 1l5 5-5 5" />
          </svg>
        </IconButton>
        <IconButton $width={27} $tone="#aaa" aria-label="Recent locations">
          <Chevron dir="down" />
        </IconButton>
        <IconButton $width={31} $tone="#fff" aria-label="Up">
          <svg width="12" height="13" viewBox="0 0 12 13" {...line} strokeWidth={1.300}>
            <path d="M6 12.500V1M1 6l5-5 5 5" />
          </svg>
        </IconButton>
        <AddressBox>
          <Crumbs>
            <FolderIcon />
            <Earlier aria-hidden="true">
              <svg width="8" height="6" viewBox="0 0 8 6" {...line} stroke="#999">
                <path d="M3.500.5L1 3l2.500 2.500M7.500.5L5 3l2.500 2.500" />
              </svg>
            </Earlier>
            {crumbs.map((name, i) => (
              <React.Fragment key={name}>
                {i > 0 && (
                  <CrumbGap>
                    <Chevron dir="right" size={8} weight={2} />
                  </CrumbGap>
                )}
                <a href="#folder">{name}</a>
              </React.Fragment>
            ))}
            <Highlight $inset="-2px" data-target="2" />
          </Crumbs>
          <IconButton $width={34} aria-label="Previous locations">
            <Chevron dir="down" />
          </IconButton>
          <IconButton $width={40} aria-label="Refresh">
            <svg width="13" height="13" viewBox="0 0 13 13" {...line} strokeWidth={1.300}>
              <path d="M11.500 4A5.500 5.500 0 1 0 12 7M11.500.5V4H8" />
            </svg>
          </IconButton>
        </AddressBox>
        <FolderSearch>
          <input type="search" placeholder="Search ILIST_DETAILS" aria-label="Search ILIST_DETAILS" />
          <IconButton as="span" $width={12} $tone="#aaa">
            <Lens size={12} />
          </IconButton>
        </FolderSearch>
      </AddressBar>
      <ToolStrip>
        <TextButton $after={32}>
          Organize
          <Triangle />
        </TextButton>
        <TextButton>New folder</TextButton>
        <StripEnd>
          <TextButton $gap={9} $after={22} aria-label="Change view">
            <svg width="16" height="16" viewBox="0 0 16 16">
              <rect width="16" height="16" rx="1" fill="#b8b8b8" />
              <path d="M2 4.500h12M2 7.500h12M2 10.500h12M2 13.500h12" stroke="#1a1a1a" />
            </svg>
            <Triangle />
          </TextButton>
          <TextButton $after={20} aria-label="Preview pane">
            <svg width="16" height="16" viewBox="0 0 16 16">
              <rect width="16" height="16" rx="1" fill="#b8b8b8" />
              <path d="M1 2.500h14V15H1z" fill="#111" />
              <path d="M2 3.500h7V14H2z" fill="#fff" />
              <path d="M9 3.500h5V14H9z" fill="#1583d8" />
            </svg>
          </TextButton>
          <TextButton aria-label="Get help">
            <svg width="16" height="16" viewBox="0 0 16 16">
              <circle cx="8" cy="8" r="8" fill="#1287d8" />
              <path d="M6 6.500C6 3.500 10.300 4 10 6.300 9.800 7.500 8 7.500 8 9.300M8 10.500V12" fill="none" stroke="#fff" strokeWidth="1.500" />
            </svg>
          </TextButton>
        </StripEnd>
      </ToolStrip>
      <Browser>
        <Tree aria-label="Folders">
          <ul>
            <TreeRule />
            {pinned.map(([name, icon]) => (
              <TreeItem key={name}>
                <span />
                {icon}
                <a href="#folder">{name}</a>
                <PinIcon />
              </TreeItem>
            ))}
            {folders.map((name) => (
              <TreeItem key={name}>
                <span />
                <FolderIcon />
                <a href="#folder">{name}</a>
              </TreeItem>
            ))}
            <TreeRule />
            {roots.map((r) => (
              <TreeItem key={r.name} $nested={r.nested} $selected={r.nested}>
                <IconButton $width={10} $tone={r.open ? "#ddd" : "#888"} aria-label={`Toggle ${r.name}`}>
                  <Chevron dir={r.open ? "down" : "right"} weight={1.500} />
                </IconButton>
                {r.icon}
                <a href="#folder">{r.name}</a>
              </TreeItem>
            ))}
          </ul>
          <Thumb />
        </Tree>
        <FileTable>
          <colgroup>
            <col style={{ width: 272 }} />
            <col style={{ width: 144 }} />
            <col style={{ width: 120 }} />
            <col style={{ width: 80 }} />
            <col />
          </colgroup>
          <thead>
            <tr>
              <HeadCell>
                <NameHead>
                  <input type="checkbox" />
                  Name
                </NameHead>
              </HeadCell>
              <HeadCell>
                <SortMark width="8" height="5" viewBox="0 0 8 5" {...line} stroke="#999">
                  <path d="M.5.500l3.500 3.500L7.500.5" />
                </SortMark>
                Date modified
              </HeadCell>
              <HeadCell>Type</HeadCell>
              <HeadCell>Size</HeadCell>
              <HeadCell />
            </tr>
          </thead>
          <tbody>
            <tr>
              <GroupCell colSpan={5}>
                <button>
                  <Chevron dir="down" size={11} weight={1} />
                  Today
                </button>
              </GroupCell>
            </tr>
            <tr>
              <td>
                <FileName>
                  <CsvIcon />
                  ILIST_DETAILS.CSV
                  <Highlight $inset="-1px" data-target="3" />
                </FileName>
              </td>
              <td>10/3/2024 12:06 PM</td>
              <td>Microsoft Excel C...</td>
              <td>69,282 KB</td>
              <td />
            </tr>
          </tbody>
        </FileTable>
      </Browser>
      <DialogFooter>
        <FooterRow>
          <FieldLabel htmlFor="file-name">File name:</FieldLabel>
          <NameBox>
            <Caret />
            <input id="file-name" type="text" />
            <Chevron dir="down" />
          </NameBox>
          <FilterBox>
            <select aria-label="File type">
              <option>All Files (*.*)</option>
            </select>
            <Chevron dir="down" />
            <Highlight $inset="-5px -6px -6px" data-target="4" />
          </FilterBox>
        </FooterRow>
        <FooterRow>
          <TextButton $gap={16} $after={17}>
            Tools
            <Triangle />
          </TextButton>
          <SplitAction>
            <button>Open</button>
            <button aria-label="Open options">
              <Triangle />
            </button>
          </SplitAction>
          <Action>Cancel</Action>
        </FooterRow>
      </DialogFooter>
    </Dialog>
  );
}

export default function App() {
  return (
    <Page>
      <GlobalStyle />
      <Stage>
        <SideNotes>
          <Note $inset={85}>
            Select Browse
            <Badge data-badge="1">1</Badge>
          </Note>
          <Note $inset={12}>
            Indicate the Folder location into which the file was downloaded
            <Badge data-badge="2">2</Badge>
          </Note>
        </SideNotes>
        <Desktop>
          <Clip>
            <Excel />
            <BackgroundForm />
            <OpenDialog />
          </Clip>
        </Desktop>
      </Stage>
      <BottomNotes>
        <StackedNote>
          <Badge data-badge="3">3</Badge>
          <p>
            Within the selected folder, the desired file(s) will be present.
            <br />
            Left-Click on the file to open.
          </p>
        </StackedNote>
        <Note>
          Note: If the expect file is not present, change the filter to All File (*.*)
          <Badge data-badge="4">4</Badge>
        </Note>
      </BottomNotes>
      <Connectors count={4} />
    </Page>
  );
}
